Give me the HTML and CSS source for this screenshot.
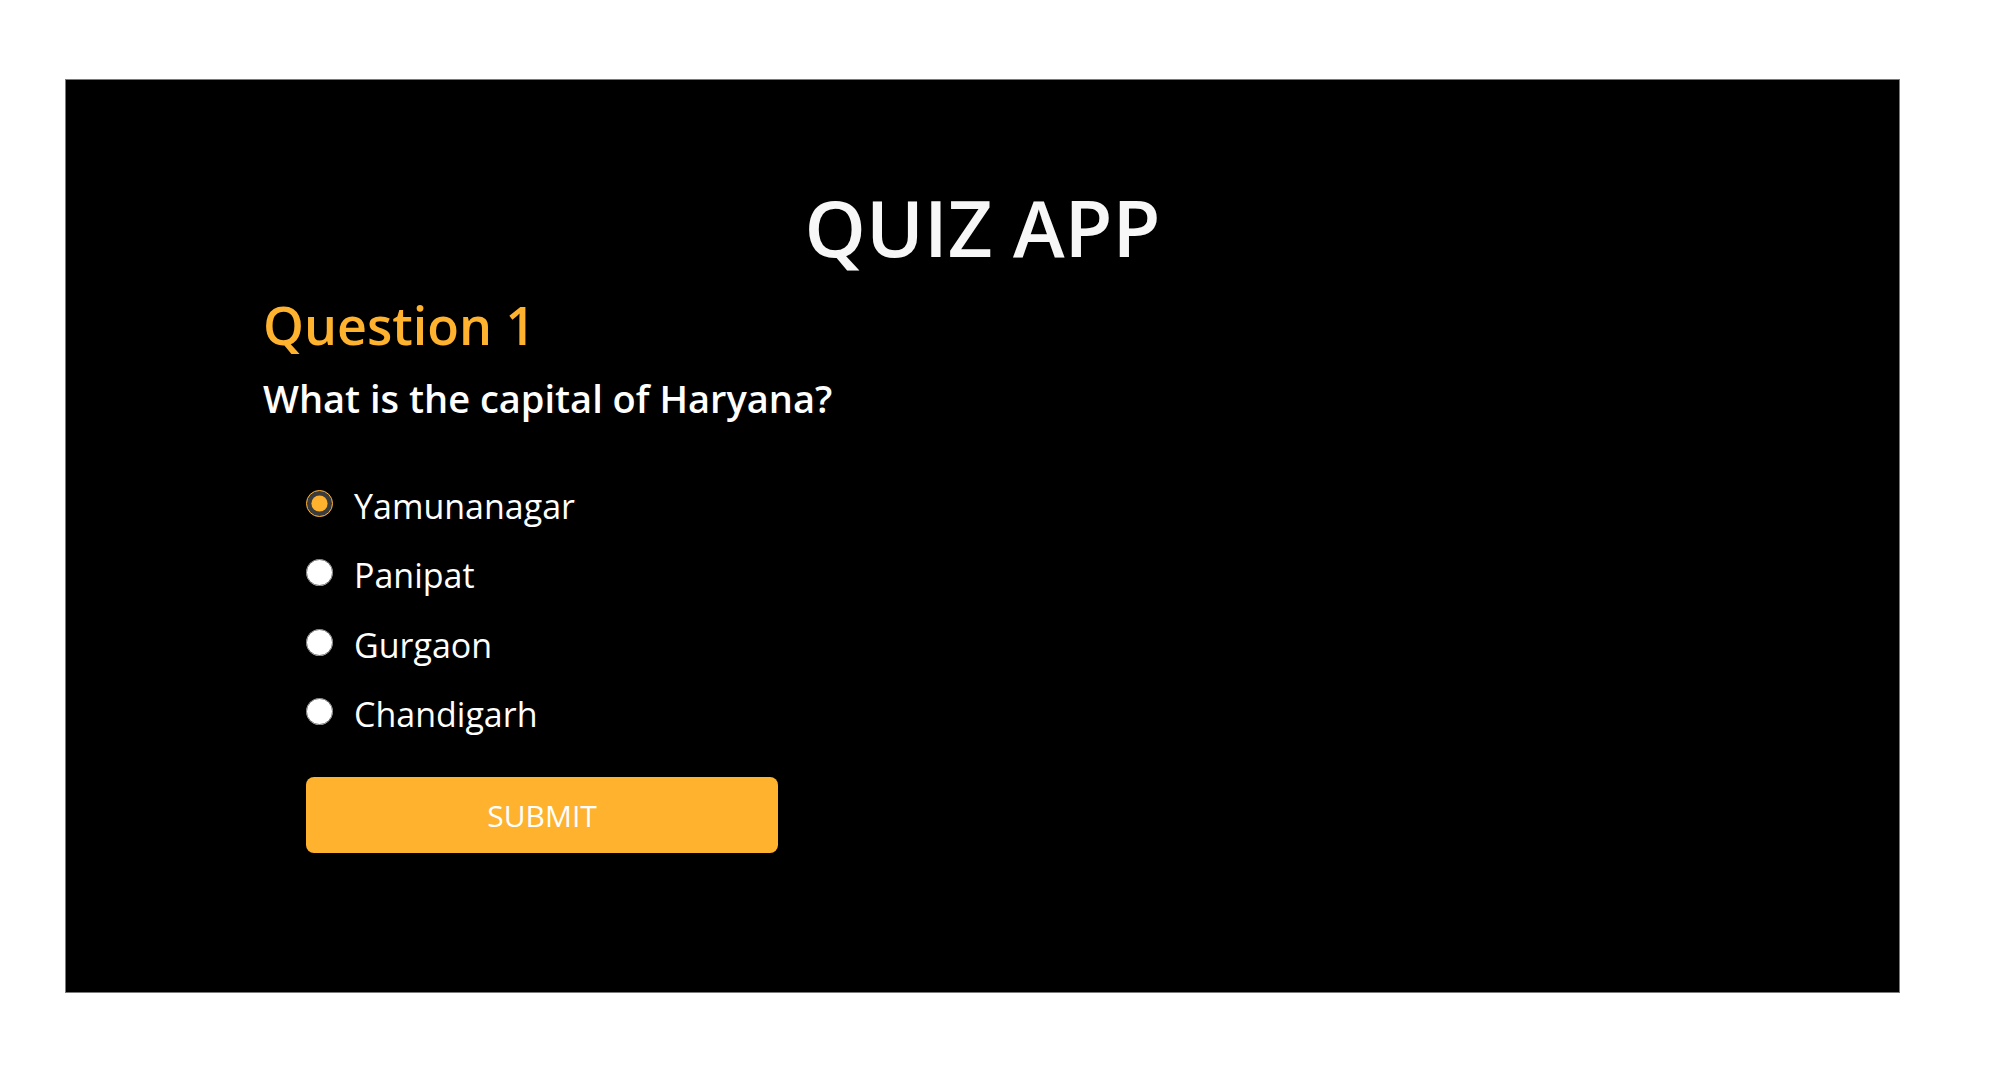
FILE: index.html
```html
<!DOCTYPE html>
<html lang="en">
<head>
<meta charset="utf-8">
<title>Quiz App</title>
<link rel="stylesheet" href="styles.css">
</head>
<body>
<main class="quiz">
  <h1 class="title">QUIZ APP</h1>
  <section class="question">
    <h2 class="q-number">Question 1</h2>
    <p class="q-text">What is the capital of Haryana?</p>
    <ul class="options">
      <li class="option"><input type="radio" name="ans" id="a1" checked><label for="a1">Yamunanagar</label></li>
      <li class="option"><input type="radio" name="ans" id="a2"><label for="a2">Panipat</label></li>
      <li class="option"><input type="radio" name="ans" id="a3"><label for="a3">Gurgaon</label></li>
      <li class="option"><input type="radio" name="ans" id="a4"><label for="a4">Chandigarh</label></li>
    </ul>
    <button class="submit" type="button">SUBMIT</button>
  </section>
</main>
</body>
</html>
```
FILE: styles.css
```css
html, body {
  margin: 0;
  padding: 0;
  background: #ffffff;
}
body {
  font-family: "Open Sans", "Noto Sans", sans-serif;
  width: 2006px;
  height: 1092px;
  overflow: hidden;
}
.quiz {
  box-sizing: border-box;
  margin: 79px 0 0 65px;
  width: 1835px;
  height: 914px;
  background: #000;
  border: 1px solid #7a7a7a;
  padding: 108px 0 0 197px;
}
.title {
  margin: 0 0 0 -197px;
  text-align: center;
  color: #f7f7f7;
  font-size: 78px;
  line-height: 78px;
  font-weight: 600;
}
.q-number {
  margin: 33px 0 0 0;
  color: #ffb22e;
  font-size: 52px;
  line-height: 52px;
  font-weight: 600;
}
.q-text {
  margin: 28px 0 0 0;
  color: #ffffff;
  font-size: 38px;
  line-height: 38px;
  font-weight: 600;
}
.options {
  list-style: none;
  margin: 54px 0 0 0;
  padding: 0 0 0 43px;
}
.option {
  display: flex;
  align-items: center;
  gap: 21px;
  height: 69.5px;
  color: #fff;
  font-size: 34px;
}
.option input {
  margin: 0 0 5px 0;
  width: 27px;
  height: 27px;
  accent-color: #ffb22e;
}
.submit {
  margin: 28px 0 0 43px;
  width: 472px;
  height: 76px;
  border: none;
  border-radius: 8px;
  background: #ffb22e;
  color: #fff;
  font-family: "Open Sans", "Noto Sans", sans-serif;
  font-size: 30px;
  font-weight: 400;
}
```
